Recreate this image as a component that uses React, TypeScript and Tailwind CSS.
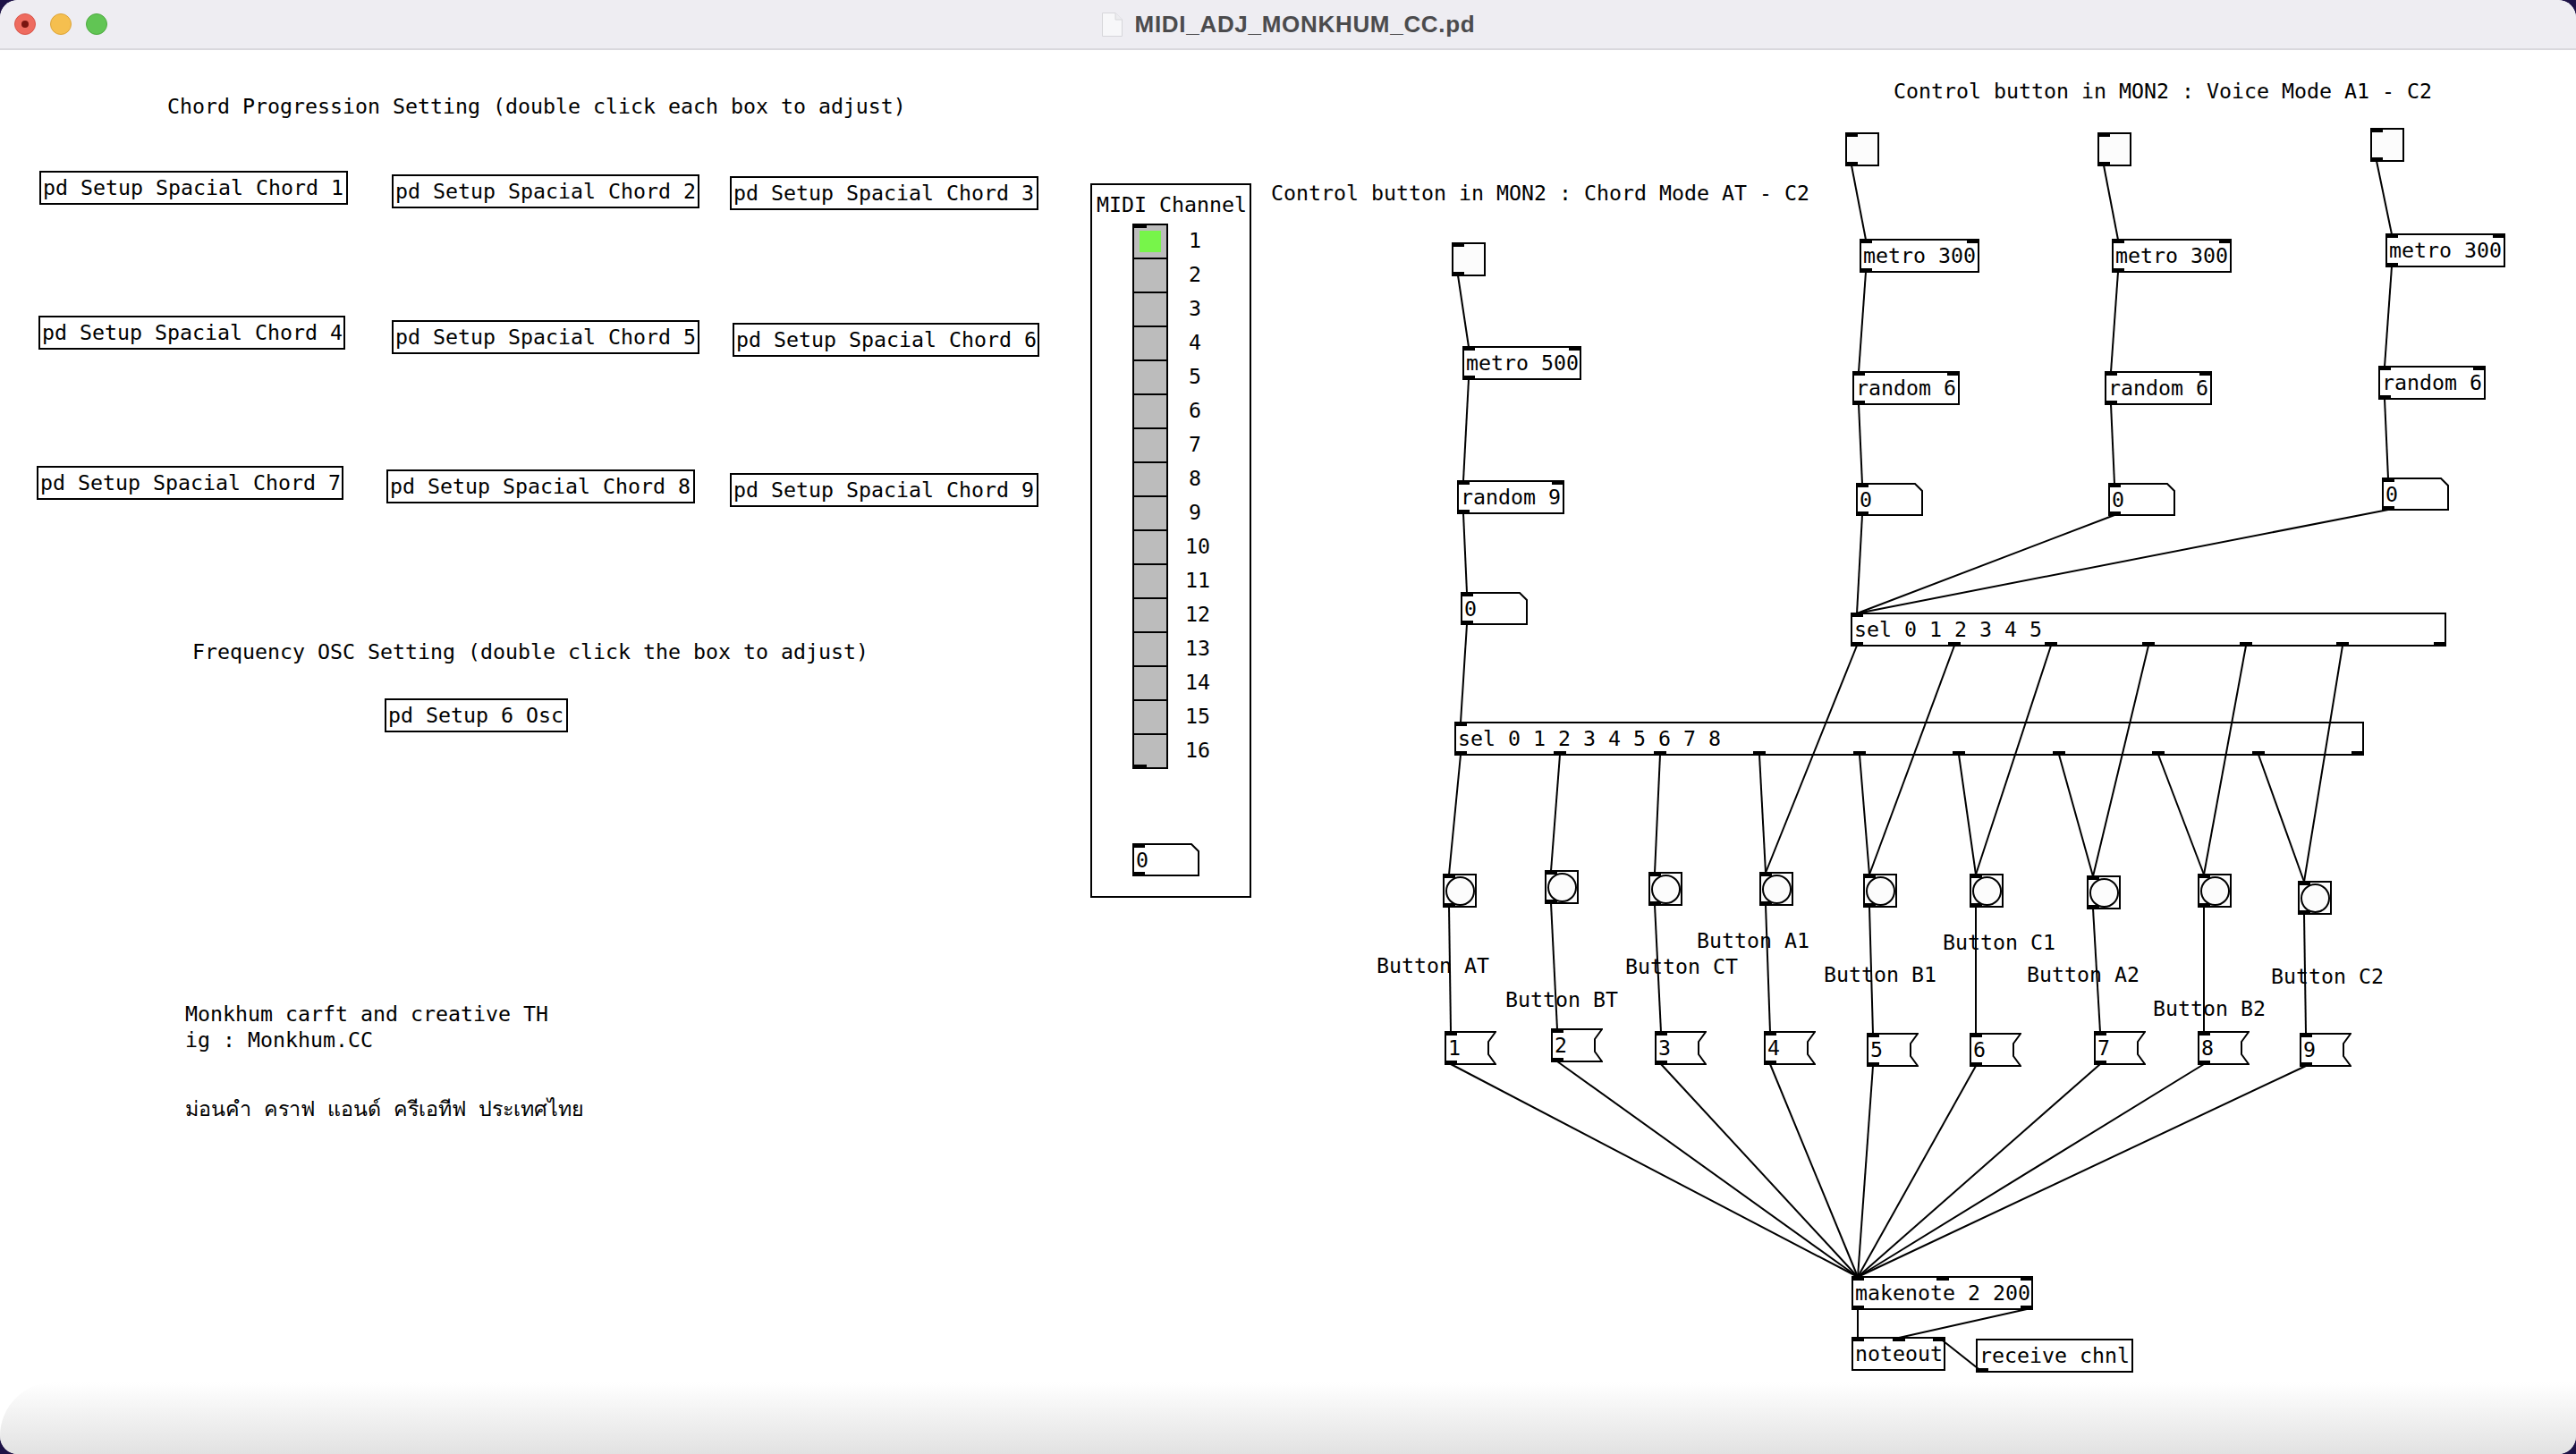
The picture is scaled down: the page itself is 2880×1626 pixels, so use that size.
import React from "react";

// window chrome height; canvas coordinates below are page coordinates
const TOP = 56;
const IO = 14;

type Node = { x: number; y: number; w: number; h: number; ins: number; outs: number };

const obj = (x: number, y: number, w: number, ins: number, outs: number): Node => ({ x, y, w, h: 38, ins, outs });
const gui = (x: number, y: number): Node => ({ x, y, w: 38, h: 38, ins: 1, outs: 1 });
const num = (x: number, y: number): Node => ({ x, y, w: 75, h: 37, ins: 1, outs: 1 });
const msg = (x: number, y: number): Node => ({ x, y, w: 58, h: 38, ins: 1, outs: 1 });

const nodes: Record<string, Node> = {
  togC: gui(1623, 271),
  togA: gui(2063, 148),
  togB: gui(2345, 148),
  togV: gui(2650, 143),
  metC: obj(1635, 387, 133, 2, 1),
  metA: obj(2079, 267, 134, 2, 1),
  metB: obj(2361, 267, 134, 2, 1),
  metV: obj(2667, 261, 134, 2, 1),
  rndC: obj(1629, 537, 120, 2, 1),
  rndA: obj(2071, 415, 120, 2, 1),
  rndB: obj(2353, 415, 120, 2, 1),
  rndV: obj(2659, 409, 120, 2, 1),
  numC: num(1633, 662),
  numA: num(2075, 540),
  numB: num(2357, 540),
  numV: num(2663, 534),
  sel6: obj(2069, 685, 666, 1, 7),
  sel9: obj(1626, 807, 1017, 1, 10),
  mk: obj(2070, 1427, 203, 3, 2),
  nout: obj(2070, 1495, 105, 3, 0),
  rcv: obj(2209, 1497, 176, 0, 1),
};

const objText: [string, string][] = [
  ["metC", "metro 500"],
  ["metA", "metro 300"],
  ["metB", "metro 300"],
  ["metV", "metro 300"],
  ["rndC", "random 9"],
  ["rndA", "random 6"],
  ["rndB", "random 6"],
  ["rndV", "random 6"],
  ["sel6", "sel 0 1 2 3 4 5"],
  ["sel9", "sel 0 1 2 3 4 5 6 7 8"],
  ["mk", "makenote 2 200"],
  ["nout", "noteout"],
  ["rcv", "receive chnl"],
];

const bangPos: [number, number][] = [
  [1613, 977], [1727, 973], [1843, 975], [1967, 975], [2083, 977],
  [2202, 977], [2333, 979], [2457, 977], [2569, 985],
];
const msgPos: [number, number][] = [
  [1615, 1153], [1734, 1150], [1850, 1153], [1972, 1153], [2087, 1155],
  [2202, 1155], [2341, 1153], [2457, 1153], [2571, 1155],
];
bangPos.forEach(([x, y], i) => (nodes["b" + i] = gui(x, y)));
msgPos.forEach(([x, y], i) => (nodes["m" + i] = msg(x, y)));

const labels: [string, number, number][] = [
  ["Button AT", 1539, 1080],
  ["Button BT", 1683, 1118],
  ["Button CT", 1817, 1081],
  ["Button A1", 1897, 1052],
  ["Button B1", 2039, 1090],
  ["Button C1", 2172, 1054],
  ["Button A2", 2266, 1090],
  ["Button B2", 2407, 1128],
  ["Button C2", 2539, 1092],
];

const chordBoxes: [number, number, number][] = [
  [44, 191, 345], [438, 195, 344], [816, 197, 345],
  [43, 353, 343], [438, 358, 344], [819, 361, 343],
  [41, 521, 343], [432, 525, 345], [816, 529, 345],
];

const wires: [string, number, string, number][] = [
  ["togC", 0, "metC", 0], ["metC", 0, "rndC", 0], ["rndC", 0, "numC", 0], ["numC", 0, "sel9", 0],
  ["togA", 0, "metA", 0], ["metA", 0, "rndA", 0], ["rndA", 0, "numA", 0], ["numA", 0, "sel6", 0],
  ["togB", 0, "metB", 0], ["metB", 0, "rndB", 0], ["rndB", 0, "numB", 0], ["numB", 0, "sel6", 0],
  ["togV", 0, "metV", 0], ["metV", 0, "rndV", 0], ["rndV", 0, "numV", 0], ["numV", 0, "sel6", 0],
  ...Array.from({ length: 9 }, (_, i) => ["sel9", i, "b" + i, 0] as [string, number, string, number]),
  ...Array.from({ length: 6 }, (_, i) => ["sel6", i, "b" + (i + 3), 0] as [string, number, string, number]),
  ...Array.from({ length: 9 }, (_, i) => ["b" + i, 0, "m" + i, 0] as [string, number, string, number]),
  ...Array.from({ length: 9 }, (_, i) => ["m" + i, 0, "mk", 0] as [string, number, string, number]),
  ["mk", 0, "nout", 0], ["mk", 1, "nout", 1], ["rcv", 0, "nout", 2],
];

function portOff(w: number, count: number, i: number) {
  return count > 1 ? Math.round(((w - IO) * i) / (count - 1)) : 0;
}

function Nubs({ n, edge }: { n: Node; edge: number }) {
  return (
    <>
      {Array.from({ length: n.ins }, (_, i) => (
        <span key={"i" + i} className="absolute h-[5px] w-[14px] bg-black" style={{ left: portOff(n.w, n.ins, i) + edge, top: edge }} />
      ))}
      {Array.from({ length: n.outs }, (_, i) => (
        <span key={"o" + i} className="absolute h-[5px] w-[14px] bg-black" style={{ left: portOff(n.w, n.outs, i) + edge, bottom: edge }} />
      ))}
    </>
  );
}

function ObjBox({ n, text }: { n: Node; text: string }) {
  return (
    <div
      className="absolute whitespace-pre border-2 border-black bg-white pl-[2px] leading-[34px]"
      style={{ left: n.x, top: n.y - TOP, width: n.w, height: n.h }}
    >
      {text}
      <Nubs n={n} edge={-2} />
    </div>
  );
}

function Toggle({ n }: { n: Node }) {
  return (
    <div className="absolute border-2 border-black bg-[#fcfcfc]" style={{ left: n.x, top: n.y - TOP, width: n.w, height: n.h }}>
      <Nubs n={n} edge={-2} />
    </div>
  );
}

function Bang({ n }: { n: Node }) {
  return (
    <div
      className="absolute flex items-center justify-center border-2 border-black bg-[#fcfcfc]"
      style={{ left: n.x, top: n.y - TOP, width: n.w, height: n.h }}
    >
      <div className="h-[33px] w-[33px] rounded-full border-2 border-black" />
      <Nubs n={n} edge={-2} />
    </div>
  );
}

function NumShape({ w, h, nubs }: { w: number; h: number; nubs?: Node }) {
  return (
    <>
      <svg className="absolute inset-0" width={w} height={h}>
        <polygon points={`1,1 ${w - 9},1 ${w - 1},9 ${w - 1},${h - 1} 1,${h - 1}`} fill="white" stroke="black" strokeWidth={2} />
      </svg>
      <span className="absolute left-[4px] top-0 leading-[37px]">0</span>
      {nubs && <Nubs n={nubs} edge={0} />}
    </>
  );
}

function NumBox({ n }: { n: Node }) {
  return (
    <div className="absolute" style={{ left: n.x, top: n.y - TOP, width: n.w, height: n.h }}>
      <NumShape w={n.w} h={n.h} nubs={n} />
    </div>
  );
}

function MsgBox({ n, text }: { n: Node; text: string }) {
  const { w, h } = n;
  return (
    <div className="absolute" style={{ left: n.x, top: n.y - TOP, width: w, height: h }}>
      <svg className="absolute inset-0" width={w} height={h}>
        <polygon
          points={`1,1 ${w - 1},1 ${w - 9},12 ${w - 9},${h - 12} ${w - 1},${h - 1} 1,${h - 1}`}
          fill="white"
          stroke="black"
          strokeWidth={2}
        />
      </svg>
      <span className="absolute left-[4px] top-0 leading-[38px]">{text}</span>
      <Nubs n={n} edge={0} />
    </div>
  );
}

function Txt({ x, cy, children }: { x: number; cy: number; children: React.ReactNode }) {
  return (
    <div className="absolute whitespace-pre leading-[38px]" style={{ left: x, top: cy - 19 - TOP }}>
      {children}
    </div>
  );
}

// MIDI channel panel: label, vradio with 16 channel numbers, number box
function ChannelPanel() {
  return (
    <div className="absolute left-[1219px] top-[149px] flex h-[799px] w-[180px] flex-col border-2 border-black">
      <div className="pl-[5px] pt-[3px] leading-[38px]">MIDI Channel</div>
      <div className="mt-[2px] flex gap-[19px] pl-[45px]">
        <div className="relative flex w-[40px] flex-col border-2 border-black">
          {Array.from({ length: 16 }, (_, i) => (
            <div
              key={i}
              className={`flex items-center justify-center bg-[#bcbcbc] ${i < 15 ? "h-[38px] border-b-2 border-black" : "h-[36px]"}`}
            >
              {i === 0 && <div className="h-[24px] w-[24px] bg-[#77f54a]" />}
            </div>
          ))}
          <span className="absolute left-[-2px] top-[-2px] h-[5px] w-[16px] bg-black" />
          <span className="absolute bottom-[-2px] left-[-2px] h-[5px] w-[16px] bg-black" />
        </div>
        <div className="flex flex-col">
          {Array.from({ length: 16 }, (_, i) => (
            <div key={i} className={`h-[38px] leading-[38px] ${i < 9 ? "pl-[4px]" : ""}`}>
              {i + 1}
            </div>
          ))}
        </div>
      </div>
      <div className="relative ml-[45px] mt-[83px] h-[37px] w-[75px]">
        <NumShape w={75} h={37} nubs={num(0, 0)} />
      </div>
    </div>
  );
}

function Wires() {
  const outPt = (id: string, i: number) => {
    const n = nodes[id];
    return [n.x + portOff(n.w, n.outs, i) + 7, n.y + n.h - 1];
  };
  const inPt = (id: string, i: number) => {
    const n = nodes[id];
    return [n.x + portOff(n.w, n.ins, i) + 7, n.y + 1];
  };
  return (
    <svg className="pointer-events-none absolute left-0 top-0" width={2880} height={1570} viewBox={`0 ${TOP} 2880 1570`}>
      {wires.map(([a, ai, b, bi], k) => {
        const [x1, y1] = outPt(a, ai);
        const [x2, y2] = inPt(b, bi);
        return <line key={k} x1={x1} y1={y1} x2={x2} y2={y2} stroke="black" strokeWidth={2} />;
      })}
    </svg>
  );
}

export default function App() {
  return (
    <div className="relative h-[1626px] w-[2880px] overflow-hidden bg-[#1d1246]">
      <div className="absolute inset-0 flex flex-col overflow-hidden rounded-[20px] bg-white">
        {/* title bar */}
        <div className="relative flex h-[56px] shrink-0 items-center justify-center border-b-2 border-[#d9d8dd] bg-[#eeedf2]">
          <div className="absolute left-[16px] top-[15px] flex gap-[16px]">
            <div className="flex h-[24px] w-[24px] items-center justify-center rounded-full border border-[#d8564b] bg-[#ee6b5f]">
              <div className="h-[8px] w-[8px] rounded-full bg-[#7a1510]" />
            </div>
            <div className="h-[24px] w-[24px] rounded-full border border-[#dca43a] bg-[#f5bf4f]" />
            <div className="h-[24px] w-[24px] rounded-full border border-[#4ea941] bg-[#61c554]" />
          </div>
          <div className="flex items-center gap-[13px]">
            <svg width="25" height="29" viewBox="0 0 25 29">
              <path d="M1.5 1.5 H16 L23.5 9 V27.5 H1.5 Z" fill="#f7f7f9" stroke="#d6d6da" strokeWidth="1" />
              <path d="M16 1.5 V9 H23.5" fill="#ececef" stroke="#d6d6da" strokeWidth="1" />
            </svg>
            <span className="font-['Liberation_Sans',Arial,sans-serif] text-[26px] font-bold tracking-[0.7px] text-[#4b4b4d]">
              MIDI_ADJ_MONKHUM_CC.pd
            </span>
          </div>
        </div>

        {/* pd canvas */}
        <div className="relative flex-1 font-['DejaVu_Sans_Mono','Noto_Sans',monospace] text-[23.25px] text-black">
          <Txt x={187} cy={119}>Chord Progression Setting (double click each box to adjust)</Txt>
          {chordBoxes.map(([x, y, w], i) => (
            <ObjBox key={i} n={obj(x, y, w, 0, 0)} text={`pd Setup Spacial Chord ${i + 1}`} />
          ))}
          <Txt x={215} cy={729}>Frequency OSC Setting (double click the box to adjust)</Txt>
          <ObjBox n={obj(430, 781, 205, 0, 0)} text="pd Setup 6 Osc" />
          <div className="absolute left-[207px] top-[1063px] leading-[29px]">
            <div>Monkhum carft and creative TH</div>
            <div>ig : Monkhum.CC</div>
          </div>
          <Txt x={207} cy={1240}>ม่อนคำ คราฟ แอนด์ ครีเอทีฟ ประเทศไทย</Txt>

          <ChannelPanel />

          <Txt x={1421} cy={216}>Control button in MON2 : Chord Mode AT - C2</Txt>
          <Txt x={2117} cy={102}>Control button in MON2 : Voice Mode A1 - C2</Txt>

          {["togC", "togA", "togB", "togV"].map((id) => (
            <Toggle key={id} n={nodes[id]} />
          ))}
          {objText.map(([id, t]) => (
            <ObjBox key={id} n={nodes[id]} text={t} />
          ))}
          {["numC", "numA", "numB", "numV"].map((id) => (
            <NumBox key={id} n={nodes[id]} />
          ))}
          {labels.map(([t, x, cy]) => (
            <Txt key={t} x={x} cy={cy}>
              {t}
            </Txt>
          ))}
          {bangPos.map((_, i) => (
            <Bang key={i} n={nodes["b" + i]} />
          ))}
          {msgPos.map((_, i) => (
            <MsgBox key={i} n={nodes["m" + i]} text={String(i + 1)} />
          ))}

          <Wires />
        </div>

        {/* bottom edge shading */}
        <div className="pointer-events-none absolute bottom-0 left-0 right-0 h-[80px] rounded-tl-[60px] bg-linear-to-b from-white/0 to-[#e2e2e2]" />
      </div>
    </div>
  );
}
